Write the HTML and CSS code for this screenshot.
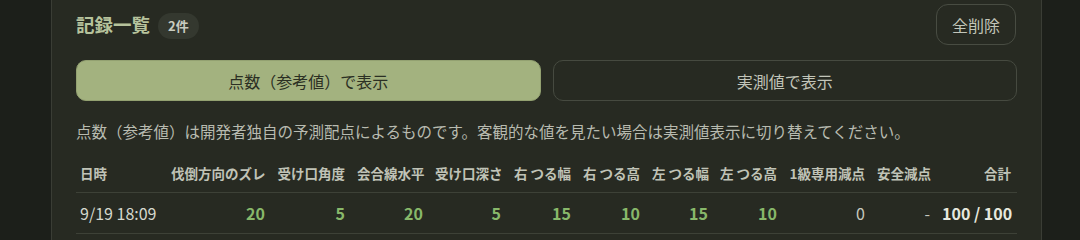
FILE: index.html
```html
<!DOCTYPE html>
<html lang="ja">
<head>
<meta charset="utf-8">
<title>記録一覧</title>
<link rel="stylesheet" href="styles.css">
</head>
<body>
<div class="page">
  <section class="card">
    <div class="card-head">
      <div class="title-wrap">
        <h2 class="title">記録一覧</h2>
        <span class="badge">2件</span>
      </div>
      <button class="btn-outline">全削除</button>
    </div>
    <div class="toggle">
      <button class="toggle-btn active">点数（参考値）で表示</button>
      <button class="toggle-btn">実測値で表示</button>
    </div>
    <p class="note">点数（参考値）は開発者独自の予測配点によるものです。客観的な値を見たい場合は実測値表示に切り替えてください。</p>
    <table class="records">
      <colgroup>
        <col class="c-date"><col class="c2"><col class="c3"><col class="c4"><col class="c5"><col class="c6"><col class="c7"><col class="c8"><col class="c9"><col class="c10"><col class="c11"><col class="c12">
      </colgroup>
      <thead>
        <tr>
          <th class="left">日時</th>
          <th>伐倒方向のズレ</th>
          <th>受け口角度</th>
          <th>会合線水平</th>
          <th>受け口深さ</th>
          <th>右 つる幅</th>
          <th>右 つる高</th>
          <th>左 つる幅</th>
          <th>左 つる高</th>
          <th>1級専用減点</th>
          <th>安全減点</th>
          <th>合計</th>
        </tr>
      </thead>
      <tbody>
        <tr>
          <td class="left date">9/19 18:09</td>
          <td class="pos">20</td>
          <td class="pos">5</td>
          <td class="pos">20</td>
          <td class="pos">5</td>
          <td class="pos">15</td>
          <td class="pos">10</td>
          <td class="pos">15</td>
          <td class="pos">10</td>
          <td class="plain">0</td>
          <td class="plain">-</td>
          <td class="total">100 / 100</td>
        </tr>
      </tbody>
    </table>
  </section>
</div>
</body>
</html>
```

FILE: styles.css
```css
html, body {
  margin: 0;
  padding: 0;
  background: #1c1f1a;
  height: 100%;
  overflow: hidden;
}

body {
  font-family: "Noto Sans CJK JP", "Noto Sans", sans-serif;
  color: #c2c5b9;
}

.page {
  padding-left: 51px;
  width: 991px;
}

.card {
  background: #272a22;
  border: 1px solid #3a3d35;
  border-top: none;
  padding: 4px 24px 0 24px;
  min-height: 260px;
}

.card-head {
  display: flex;
  justify-content: space-between;
  align-items: center;
  height: 41px;
}

.title-wrap {
  display: flex;
  align-items: center;
  gap: 8px;
}

.title {
  margin: 0;
  font-size: 18.5px;
  font-weight: 700;
  color: #b6c29c;
  line-height: 1;
}

.badge {
  background: #34382f;
  color: #c9ccc0;
  font-size: 13px;
  font-weight: 700;
  border-radius: 13px;
  padding: 0 10px;
  height: 26px;
  line-height: 26px;
  position: relative;
  top: 1px;
}

.btn-outline {
  font-family: inherit;
  background: transparent;
  border: 1px solid #484c42;
  color: #c2c5b9;
  border-radius: 12px;
  font-size: 16px;
  height: 41px;
  width: 80px;
  padding: 0;
  margin-right: 1px;
}

.toggle {
  display: grid;
  grid-template-columns: 1fr 1fr;
  gap: 12px;
  margin-top: 15px;
}

.toggle-btn {
  font-family: inherit;
  font-size: 16px;
  height: 41px;
  border-radius: 10px;
  border: 1px solid #464a40;
  background: transparent;
  color: #c2c5b9;
  padding: 0;
}

.toggle-btn.active {
  background: #a3b27f;
  border-color: #93a171;
  color: #2b2f23;
}

.note {
  margin: 18px 0 0 0;
  font-size: 15.5px;
  line-height: 25px;
  color: #b8bbb0;
  white-space: nowrap;
}

.records {
  width: 100%;
  table-layout: fixed;
  border-collapse: collapse;
  margin-top: 10px;
}

.c-date { width: 89px; }
.c2 { width: 106px; }
.c3 { width: 80px; }
.c4 { width: 78px; }
.c5 { width: 78px; }
.c6 { width: 70px; }
.c7 { width: 69px; }
.c8 { width: 68px; }
.c9 { width: 69px; }
.c10 { width: 88px; }
.c11 { width: 65px; }
.c12 { width: 81px; }

.records th {
  font-size: 13.5px;
  font-weight: 700;
  color: #c0c3b7;
  text-align: right;
  padding: 0 6px;
  height: 38px;
  border-bottom: 1px solid #3d4137;
  white-space: nowrap;
}

.records td {
  text-align: right;
  padding: 0 6px;
  height: 40px;
  font-size: 16px;
  border-bottom: 1px solid #3d4137;
  white-space: nowrap;
}

.records .left {
  text-align: left;
  padding-left: 4px;
}

.records .date {
  color: #d6d8ce;
}

.records .pos {
  color: #88b86a;
  font-weight: 700;
}

.records .plain {
  color: #c6c8be;
}

.records .total {
  color: #e6e8de;
  font-weight: 700;
}
```
